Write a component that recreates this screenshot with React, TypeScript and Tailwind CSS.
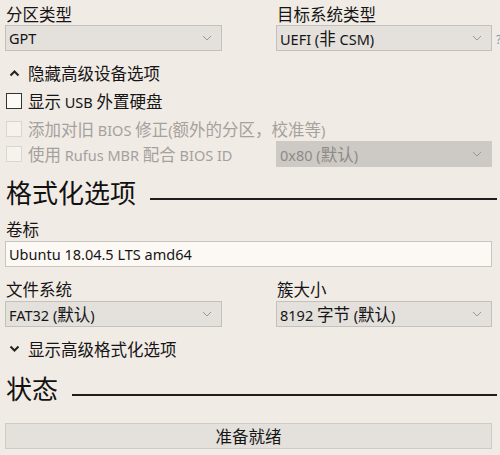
import React from "react";

const FONT = { fontFamily: '"Noto Sans", "Noto Sans CJK SC", sans-serif' };

function T({ children }: { children: string }) {
  const parts = children.split(/([\u3000-\u9fff\uff00-\uffef]+)/).filter((p) => p.length > 0);
  return (
    <>
      {parts.map((p, i) =>
        /[\u3000-\u9fff\uff00-\uffef]/.test(p) ? (
          <span
            key={i}
            className="text-[16.5px] leading-[20px]"
            style={{ fontFamily: '"Noto Sans CJK SC", sans-serif' }}
          >
            {p}
          </span>
        ) : (
          <span key={i} className="leading-[20px]">
            {p}
          </span>
        )
      )}
    </>
  );
}

function Arrow() {
  return (
    <svg width="10" height="6" viewBox="0 0 10 6" className="shrink-0">
      <polyline points="1,1 5,5 9,1" fill="none" stroke="#9a9894" strokeWidth="1" />
    </svg>
  );
}

function Select({ text, disabled, w }: { text: string; disabled?: boolean; w: string }) {
  return (
    <div
      className={`${w} h-[26px] flex items-center justify-between pl-[3px] pr-[9px] border ${
        disabled ? "bg-[#cdc9c5] border-[#cdc9c5] text-[#8f8b87]" : "bg-[#e4e0dc] border-[#c4c0bc] text-[#151515]"
      }`}
    >
      <span className="h-[20px] flex items-center whitespace-nowrap">
        <span className="leading-[20px]">
          <T>{text}</T>
        </span>
      </span>
      <Arrow />
    </div>
  );
}

function Check({ label, disabled }: { label: string; disabled?: boolean }) {
  return (
    <div className="flex items-center h-[20px]">
      <div
        className={`w-[16px] h-[16px] ml-[1px] shrink-0 border ${
          disabled ? "border-[#d9d5d0] bg-[#f6f2ee]" : "border-[#333] bg-[#fcfaf7]"
        }`}
      />
      <span className={`ml-[6px] leading-[20px] whitespace-nowrap ${disabled ? "text-[#a5a19d]" : "text-[#151515]"}`}>
        <T>{label}</T>
      </span>
    </div>
  );
}

function Chevron({ up }: { up?: boolean }) {
  return (
    <svg width="11" height="8" viewBox="0 0 11 8" className="ml-[4px] mr-[8px] shrink-0">
      <polyline
        points={up ? "1.5,6.5 5.5,2.5 9.5,6.5" : "1.5,1.5 5.5,5.5 9.5,1.5"}
        fill="none"
        stroke="#222"
        strokeWidth="2"
      />
    </svg>
  );
}

function Heading({ text }: { text: string }) {
  return (
    <div className="flex items-end h-[30px]">
      <span
        className="text-[26px] leading-[30px] text-[#111] ml-[1px]"
        style={{ fontFamily: '"Noto Sans CJK SC", sans-serif' }}
      >
        {text}
      </span>
      <div className="flex-1 ml-[14px] mb-[7px] mr-[3px] h-[2px] bg-[#1e1e1e]" />
    </div>
  );
}

function Label({ text }: { text: string }) {
  return (
    <div className="h-[20px] flex items-center pl-[1px] whitespace-nowrap">
      <span className="leading-[20px]">
        <T>{text}</T>
      </span>
    </div>
  );
}

export default function App() {
  return (
    <div
      style={FONT}
      className="w-[500px] h-[455px] bg-[#f1ebe5] overflow-hidden text-[14.5px] leading-[20px] text-[#151515] pl-[5px] relative"
    >
      <div className="flex mt-[4px]">
        <div className="w-[217px]">
          <Label text="分区类型" />
          <div className="mt-[1px]">
            <Select text="GPT" w="w-[217px]" />
          </div>
        </div>
        <div className="w-[216px] ml-[54px]">
          <Label text="目标系统类型" />
          <div className="mt-[1px]">
            <Select text="UEFI (非 CSM)" w="w-[216px]" />
          </div>
        </div>
        <div className="ml-[4px] mt-[28px] text-[12px] leading-[16px] text-[#7b9ab8]">?</div>
      </div>

      <div className="flex items-center h-[20px] mt-[12px]">
        <Chevron up />
        <span className="leading-[20px]">
          <T>隐藏高级设备选项</T>
        </span>
      </div>

      <div className="mt-[8px]">
        <Check label="显示 USB 外置硬盘" />
      </div>
      <div className="mt-[8px]">
        <Check label="添加对旧 BIOS 修正(额外的分区，校准等)" disabled />
      </div>
      <div className="flex items-center mt-[2px] h-[26px]">
        <div className="w-[271px]">
          <Check label="使用 Rufus MBR 配合 BIOS ID" disabled />
        </div>
        <Select text="0x80 (默认)" w="w-[216px]" disabled />
      </div>

      <div className="mt-[10px]">
        <Heading text="格式化选项" />
      </div>

      <div className="mt-[12px]">
        <Label text="卷标" />
      </div>
      <div className="mt-[2px] w-[487px] h-[26px] bg-[#fcf9f5] border border-[#c8c4c0] flex items-center pl-[3px]">
        <span className="leading-[20px]">Ubuntu 18.04.5 LTS amd64</span>
      </div>

      <div className="flex mt-[12px]">
        <div className="w-[217px]">
          <Label text="文件系统" />
          <div className="mt-[2px]">
            <Select text="FAT32 (默认)" w="w-[217px]" />
          </div>
        </div>
        <div className="w-[216px] ml-[54px]">
          <Label text="簇大小" />
          <div className="mt-[2px]">
            <Select text="8192 字节 (默认)" w="w-[216px]" />
          </div>
        </div>
      </div>

      <div className="flex items-center h-[20px] mt-[12px]">
        <Chevron />
        <span className="leading-[20px]">
          <T>显示高级格式化选项</T>
        </span>
      </div>

      <div className="mt-[14px]">
        <Heading text="状态" />
      </div>

      <div className="mt-[20px] w-[487px] h-[26px] bg-[#e4e0dc] border border-[#cfcbc7] flex items-center justify-center">
        <span className="leading-[20px]">
          <T>准备就绪</T>
        </span>
      </div>
    </div>
  );
}
